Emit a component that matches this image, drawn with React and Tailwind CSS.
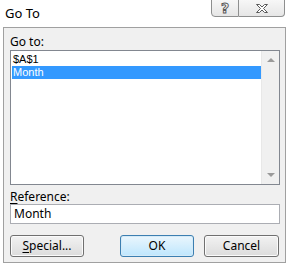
import React from "react";

const ListItem = ({ label, selected }) => (
  <div
    className={`h-[13px] leading-[13px] pl-[1px] text-[11px] font-['Liberation_Sans',sans-serif] ${
      selected ? "bg-[#3399ff] text-white" : "text-black"
    }`}
  >
    {label}
  </div>
);

const Button = ({ children, primary, className = "" }) => (
  <button
    className={`h-[22px] rounded-[3px] border text-[12px] leading-none flex items-center justify-center ${
      primary
        ? "border-[#3c7fb1] bg-gradient-to-b from-[#eaf6fd] to-[#bee6fd] shadow-[inset_0_0_0_1px_#d5eaf7]"
        : "border-[#707070] bg-gradient-to-b from-[#f2f2f2] to-[#dcdcdc] shadow-[inset_0_0_0_1px_#fbfbfb]"
    } ${className}`}
  >
    {children}
  </button>
);

export default function App() {
  return (
    <div className="w-[291px] h-[270px] bg-white font-['Noto_Sans',sans-serif] text-[12px] text-black overflow-hidden">
      {/* Title bar */}
      <div className="h-[27px] flex items-start justify-between">
        <div className="pl-[5px] pt-[5px] text-[13px] leading-[16px]">Go To</div>
        <div className="flex mr-[6px] -mt-[1px]">
          <div className="w-[28px] h-[18px] border border-[#8e8f8f] rounded-bl-[4px] bg-gradient-to-b from-[#f7f7f7] to-[#e6e6e6] flex items-center justify-center">
            <svg width="12" height="14" viewBox="0 0 12 14">
              <text
                x="6"
                y="12"
                textAnchor="middle"
                fontSize="14"
                fontWeight="bold"
                fontFamily="DejaVu Sans, sans-serif"
                fill="#fff"
                stroke="#5a5a5a"
                strokeWidth="1"
              >
                ?
              </text>
            </svg>
          </div>
          <div className="w-[46px] h-[18px] border border-l-0 border-[#8e8f8f] rounded-br-[4px] bg-gradient-to-b from-[#f7f7f7] to-[#e6e6e6] flex items-center justify-center">
            <svg width="14" height="11" viewBox="0 0 14 11">
              <path
                d="M1.5 1.5 L4.5 1.5 L7 4 L9.5 1.5 L12.5 1.5 L8.5 5.5 L12.5 9.5 L9.5 9.5 L7 7 L4.5 9.5 L1.5 9.5 L5.5 5.5 Z"
                fill="#fff"
                stroke="#5a5a5a"
                strokeWidth="1"
                strokeLinejoin="round"
              />
            </svg>
          </div>
        </div>
      </div>

      {/* Dialog body */}
      <div className="ml-[3px] w-[283px] h-[236px] border border-[#a0a0a0] bg-[#f0f0f0] px-[6px] flex flex-col">
        <div className="mt-[5px] h-[17px] leading-[17px]">Go to:</div>

        {/* List box */}
        <div className="h-[135px] w-[270px] border border-[#828790] bg-white flex">
          <div className="flex-1 pl-[1px] pt-[2px]">
            <ListItem label="$A$1" />
            <ListItem label="Month" selected />
          </div>
          <div className="w-[18px] bg-[#f0f0f0] border-l border-[#e8e8e8] flex flex-col justify-between items-center py-[6px]">
            <svg width="8" height="5" viewBox="0 0 8 5">
              <path d="M0 5 L4 1 L8 5 Z" fill="#9a9a9a" />
            </svg>
            <svg width="8" height="5" viewBox="0 0 8 5">
              <path d="M0 0 L8 0 L4 4 Z" fill="#9a9a9a" />
            </svg>
          </div>
        </div>

        <div className="mt-[4px] h-[15px] leading-[15px]">
          <span className="underline underline-offset-2">R</span>eference:
        </div>

        <div className="h-[20px] w-[270px] border border-[#abadb3] bg-white pl-[3px] leading-[18px]">
          Month
        </div>

        {/* Buttons */}
        <div className="mt-[11px] flex">
          <Button className="w-[74px]">
            <span>
              <span className="underline underline-offset-2">S</span>pecial...
            </span>
          </Button>
          <Button primary className="w-[74px] ml-[36px]">
            OK
          </Button>
          <Button className="w-[75px] ml-[10px]">Cancel</Button>
        </div>
      </div>
    </div>
  );
}
